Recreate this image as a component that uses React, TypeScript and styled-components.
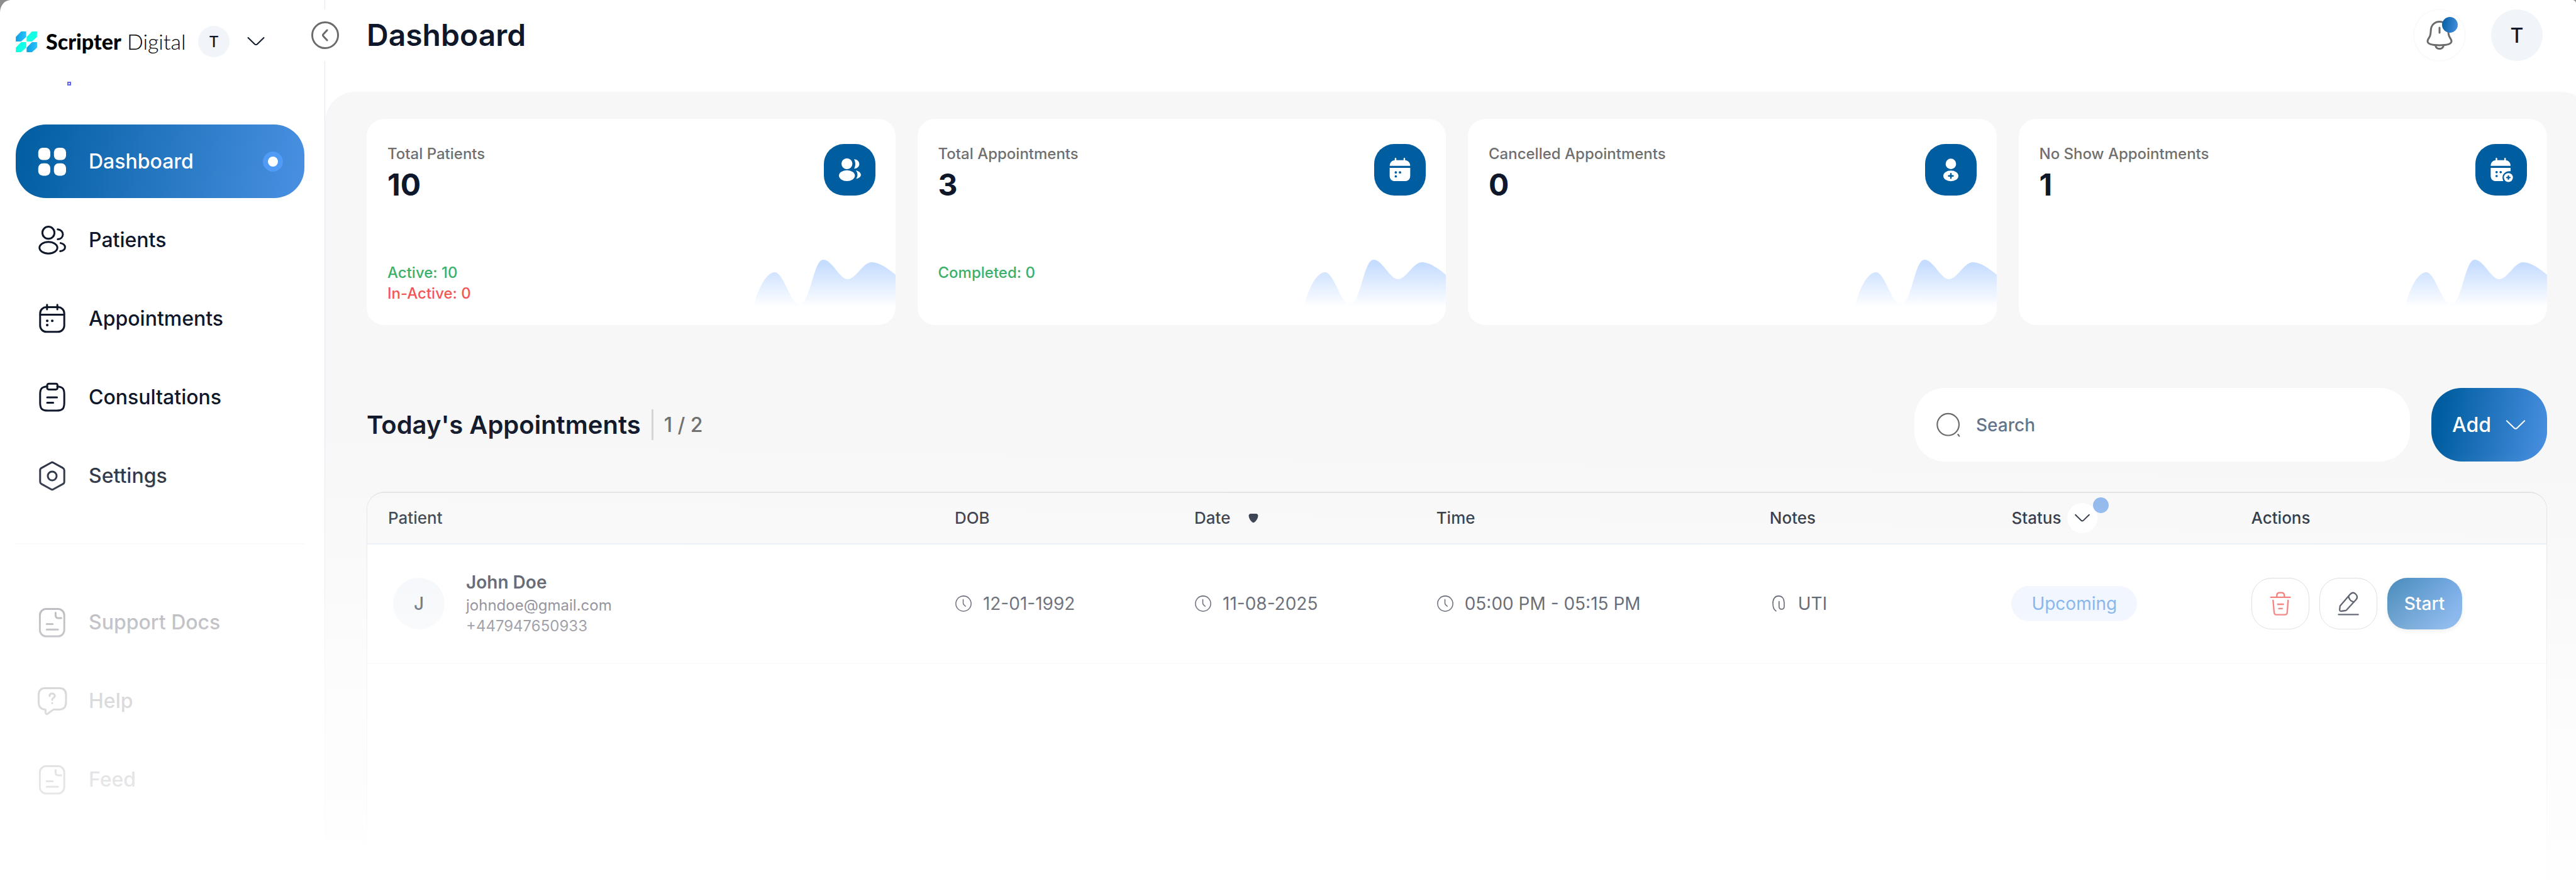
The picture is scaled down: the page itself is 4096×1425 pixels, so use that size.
import React from "react";
import styled, { createGlobalStyle, css } from "styled-components";

const ink = "#0f172a";
const muted = "#6f6f6f";
const brandBlue = "#005d9f";
const skyBlue = "#4a90e2";
const canvas = "#f7f7f7";

const GlobalStyle = createGlobalStyle`
  *, *::before, *::after { box-sizing: border-box; }
  body {
    margin: 0;
    background: #8d8d8d;
    color: ${ink};
    font-family: Inter, "Liberation Sans", sans-serif;
  }
  button, input { font: inherit; color: inherit; }
  button { border: 0; padding: 0; background: none; cursor: pointer; }
  a { color: inherit; text-decoration: none; }
  h1, h2, p { margin: 0; padding: 0; }
`;

/* ---------- Icons ---------- */

const Glyph = styled.svg<{ $size: number; $weight?: number }>`
  flex: none;
  display: block;
  width: ${(p) => p.$size}px;
  height: ${(p) => p.$size}px;
  fill: none;
  stroke: currentColor;
  stroke-width: ${(p) => p.$weight ?? 1.5};
  stroke-linecap: round;
  stroke-linejoin: round;
  overflow: visible;
`;

type IconProps = { size: number; weight?: number };

const Icon = ({ size, weight, children }: IconProps & { children: React.ReactNode }) => (
  <Glyph viewBox="0 0 24 24" $size={size} $weight={weight} aria-hidden="true">
    {children}
  </Glyph>
);

const GridIcon = ({ size }: IconProps) => (
  <Icon size={size}>
    <g fill="currentColor" stroke="none">
      <rect x="0.9" y="1" width="9.6" height="9.8" rx="3.6" />
      <rect x="13.4" y="1" width="9.6" height="9.8" rx="3.6" />
      <rect x="0.9" y="13.4" width="9.6" height="9.8" rx="3.6" />
      <rect x="13.4" y="13.4" width="9.6" height="9.8" rx="3.6" />
    </g>
  </Icon>
);

const PeopleIcon = ({ size }: IconProps) => (
  <Icon size={size}>
    <circle cx="9" cy="6.1" r="4.8" />
    <ellipse cx="9" cy="18" rx="7.1" ry="4.6" />
    <path d="M16.4 3.4c2.4.2 4.1 1.9 4.1 4s-1.7 3.7-4.1 3.9" />
    <path d="M18.7 14.3c2.1.5 3.5 1.8 3.5 3.3s-1.5 2.8-3.8 3.2" />
  </Icon>
);

const CalendarIcon = ({ size }: IconProps) => (
  <Icon size={size}>
    <rect x="2.4" y="2.7" width="19.2" height="19.7" rx="5" />
    <path d="M7.9 0.9v3.6M16.1 0.9v3.6M2.6 8.8h18.8" />
    <path d="M8 13.6h.1M12 13.6h.1M8 17h.1" strokeWidth="2" />
  </Icon>
);

const ClipboardIcon = ({ size }: IconProps) => (
  <Icon size={size}>
    <path d="M8 3.4c-4 .1-5.6 1.6-5.6 6v7c0 4.6 1.5 6.100 6 6.100h7.2c4.5 0 6-1.500 6-6.100v-7c0-4.400-1.600-5.900-5.600-6" />
    <rect x="8" y="1.1" width="8.2" height="4.6" rx="1.3" />
    <path d="M8 12h7.8M8 16.3h4.8" />
  </Icon>
);

const SettingsIcon = ({ size }: IconProps) => (
  <Icon size={size}>
    <path d="M11 1.5c.6-.4 1.4-.4 2 0l7.6 4.2c.6.4 1 1 1 1.7v9.2c0 .7-.4 1.4-1 1.7L13 22.5c-.6.4-1.4.4-2 0l-7.6-4.2c-.6-.4-1-1-1-1.7V7.4c0-.7.4-1.400 1-1.700z" />
    <circle cx="12" cy="12" r="3.5" />
  </Icon>
);

const DocIcon = ({ size }: IconProps) => (
  <Icon size={size}>
    <rect x="2.2" y="1.2" width="19.4" height="21.8" rx="5" />
    <path d="M14.7 4.3v1.900c0 1.400.8 2.300 2.200 2.300h2.300M7.600 13.300h4.800M7.600 17.600h9" />
  </Icon>
);

const HelpIcon = ({ size }: IconProps) => (
  <Icon size={size}>
    <path d="M6.3 1.8h11.4c3.4 0 5.3 1.9 5.3 5.5v5.7c0 3.6-1.9 5.7-5.3 5.7H13l-4.500 3.300c-1 .7-1.800.1-1.800-1v-2.300c-3.500 0-5.500-2.100-5.500-5.700V7.300c0-3.600 1.900-5.500 5.100-5.500z" />
    <path d="M9.900 8c0-1.300.9-2 2.100-2s2.100.8 2.100 1.900c0 1.500-2.100 1.600-2.100 3.100M12 13.600h.1" />
  </Icon>
);

const ChevronDown = ({ size, weight }: IconProps) => (
  <Icon size={size} weight={weight}>
    <path d="M2 7.200l8.400 8.200c.9.900 2.300.9 3.200 0L22 7.200" />
  </Icon>
);

const CollapseIcon = ({ size }: IconProps) => (
  <Icon size={size} weight={1.6}>
    <circle cx="12" cy="12" r="11.2" />
    <path d="M13.7 7.600l-3.200 3.500c-.5.500-.5 1.300 0 1.800l3.200 3.500" />
  </Icon>
);

const BellIcon = ({ size }: IconProps) => (
  <Icon size={size}>
    <path d="M12 1.200c-4 0-6.700 2.900-6.900 6.800-.1 2.500-.2 3.600-.9 5.100-.8 1.600-1.700 2.300-1.700 3.700 0 2.200 3.600 3.200 9.500 3.200s9.500-1 9.500-3.200c0-1.400-.9-2.100-1.700-3.700-.7-1.500-.8-2.600-.9-5.100C18.700 4.100 16 1.200 12 1.200z" />
    <path d="M8.800 20.300c.4 1.500 1.600 2.500 3.200 2.500s2.800-1 3.200-2.500M12 6v4" />
  </Icon>
);

const SearchIcon = ({ size }: IconProps) => (
  <Icon size={size} weight={1.3}>
    <circle cx="11.8" cy="11.5" r="10.4" />
    <path d="M21.2 21l1.200 1.600" />
  </Icon>
);

const ClockIcon = ({ size }: IconProps) => (
  <Icon size={size} weight={1.3}>
    <circle cx="12" cy="12" r="10.4" />
    <path d="M11.600 6.400v5c0 .9.300 1.600 1 2.200l2.200 2" />
  </Icon>
);

const ClipIcon = ({ size }: IconProps) => (
  <Icon size={size} weight={1.4}>
    <path d="M8.600 22.200C5.600 20.200 4.300 16.500 4.300 11.500 4.300 5.200 7.300 1.600 12 1.600s7.700 3.600 7.700 9.400v4.600c0 2.500-1.300 4-3.500 4s-3.500-1.500-3.500-4V9" />
  </Icon>
);

const TrashIcon = ({ size }: IconProps) => (
  <Icon size={size} weight={1.4}>
    <path d="M2.800 5.900h18.500M8.600 5.700V4.200c0-1.700 1-2.600 2.600-2.600h1.900c1.600 0 2.600.9 2.600 2.600v1.500M5 9l1 11.400c.1 1.400.8 2.200 2.200 2.200h8.200c1.400 0 2-.8 2.100-2.200L19.300 9M9.400 12.600h5.400M10.500 16.700h3.200" />
  </Icon>
);

const PencilIcon = ({ size }: IconProps) => (
  <Icon size={size} weight={1.4}>
    <path d="M4.100 14.300l9.300-10.800c2-2.400 3.700-2.300 5.400-.8 2.200 2 2.200 3.600.5 5.500l-8.800 9.700c-.3.400-.7.600-1.200.7l-4.100.6c-1 .1-1.500-.4-1.500-1.400zM12.300 5.200c.4 2.700 2.100 4.700 5 5.300M2.700 22.400h18.700" />
  </Icon>
);

const SortMark = styled.svg`
  display: block;
  width: 16px;
  height: 16px;
  fill: currentColor;
`;

const PeopleSolid = () => (
  <Icon size={40}>
    <g fill="currentColor" stroke="none">
      <circle cx="9.4" cy="6.2" r="5.2" />
      <ellipse cx="9.4" cy="17.6" rx="7.6" ry="5.2" />
      <path d="M16.200 2c2.900 0 5 2 5 4.500s-2.100 4.500-5 4.500c1.600-2.800 1.600-6.200 0-9z" />
      <path d="M18 12.600c2.800.7 4.700 2.300 4.700 4.200s-1.900 3.300-4.500 3.900c1.700-2.600 1.700-5.500-.2-8.100z" />
    </g>
  </Icon>
);

const CalendarSolid = () => (
  <Icon size={40}>
    <g fill="currentColor" stroke="none">
      <path d="M2.200 8.300C2.400 4.600 4.600 2.900 8 2.900h8c3.400 0 5.600 1.700 5.800 5.400z" />
      <path d="M2.200 10.200h19.600v7.300c0 3.500-1.700 5.300-5.300 5.300h-9c-3.600 0-5.300-1.800-5.300-5.300z" />
    </g>
    <path d="M7.800 1.400v2.500M16.200 1.400v2.500" />
    <path d="M8 14.500h.1M12 14.500h.1M8 18.300h.1" stroke={brandBlue} strokeWidth="2.2" />
  </Icon>
);

const PersonCrossSolid = () => (
  <Icon size={40}>
    <g fill="currentColor" stroke="none">
      <circle cx="12" cy="6.4" r="5" />
      <ellipse cx="12" cy="17.9" rx="7.2" ry="5.1" />
    </g>
    <path d="M12 15.800v4.200M9.900 17.900h4.200" stroke={brandBlue} />
  </Icon>
);

const CalendarCrossSolid = () => (
  <Icon size={40}>
    <g fill="currentColor" stroke="none">
      <path d="M2 8.300c.2-3.700 2.300-5.400 5.700-5.400h7.600c3.400 0 5.500 1.700 5.700 5.400z" />
      <path d="M2 10.200h19v3.200c-4.300-.6-7.700 2.200-7.700 6 0 1 .2 2.100.8 3.400H7.200C3.700 22.800 2 21 2 17.500z" />
      <circle cx="18.9" cy="19.4" r="4.3" />
    </g>
    <path d="M7.500 1.400v2.500M15.700 1.400v2.500" />
    <path d="M7.600 14.300h.1M11.500 14.300h.1M7.600 18h.1" stroke={brandBlue} strokeWidth="2.2" />
    <path d="M18.900 17.900v3M17.400 19.400h3" stroke={brandBlue} strokeWidth="1.4" />
  </Icon>
);

/* ---------- Shell ---------- */

const Shell = styled.div`
  position: relative;
  display: grid;
  grid-template-columns: 517px minmax(0, 1fr);
  min-height: 100vh;
  background: #fff;
  border-radius: 17px 6px 0 0 / 20px 5px 0 0;
  overflow: hidden;
`;

const BottomFade = styled.div`
  position: absolute;
  inset: 0;
  pointer-events: none;
  background: linear-gradient(
    181deg,
    rgba(255, 255, 255, 0) 721px,
    rgba(255, 255, 255, 0.17) 837px,
    rgba(255, 255, 255, 0.28) 921px,
    rgba(255, 255, 255, 0.38) 994px,
    rgba(255, 255, 255, 0.54) 1065px,
    rgba(255, 255, 255, 0.69) 1155px,
    rgba(255, 255, 255, 0.81) 1330px,
    rgba(255, 255, 255, 0.94) 1396px,
    #fff 1428px
  );
`;

const Sidebar = styled.aside`
  position: relative;
  display: flex;
  flex-direction: column;
  padding: 41px 32px 0 25px;
  border-right: 1px solid #e2e8f0;
`;

const Brand = styled.div`
  display: flex;
  align-items: center;
  height: 50px;
`;

const LogoMark = styled.svg`
  width: 34px;
  height: 33px;
  margin-right: 14px;
`;

const BrandName = styled.span`
  flex: none;
  width: 220px;
  font-family: Lato, sans-serif;
  font-size: 34px;
  font-weight: 300;
  line-height: 42px;
  color: #000;
  white-space: nowrap;

  strong { font-weight: 900; }
`;

const Avatar = styled.span<{ $size: number; $font: number }>`
  display: inline-flex;
  flex: none;
  align-items: center;
  justify-content: center;
  width: ${(p) => p.$size}px;
  height: ${(p) => p.$size}px;
  border-radius: 50%;
  background: #f1f5f9;
  font-size: ${(p) => p.$font}px;
  font-weight: 500;
`;

const AccountButton = styled.button`
  display: flex;
  align-items: center;
  gap: 27px;
  margin-left: 22px;
`;

const PulseDot = styled.span`
  width: 6px;
  height: 6px;
  margin: 39px 0 62px 82px;
  border: 2px solid #6366f1;
`;

const CollapseButton = styled.button`
  position: absolute;
  top: 15px;
  right: -42px;
  z-index: 1;
  display: grid;
  place-items: center;
  width: 82px;
  height: 82px;
  background: #fff;
  color: #6b6b6b;
`;

const NavList = styled.nav`
  display: flex;
  flex-direction: column;
  gap: 8px;
`;

const NavLink = styled.a<{ $active?: boolean; $quiet?: boolean }>`
  display: flex;
  align-items: center;
  gap: 34px;
  height: 117px;
  padding: 0 34px;
  border-radius: 48px;
  font-size: 32px;
  font-weight: 500;
  line-height: 40px;
  color: ${(p) => (p.$quiet ? "#80808a" : ink)};
  ${(p) =>
    p.$active &&
    css`
      color: #fff;
      background: linear-gradient(100deg, ${brandBlue}, ${skyBlue});
    `}
`;

const ActiveDot = styled.span`
  width: 32px;
  height: 32px;
  margin-left: auto;
  border: 8px solid #509bf5;
  border-radius: 50%;
  background: #fff;
`;

const SidebarRule = styled.hr`
  width: 100%;
  height: 2px;
  margin: 49px 0 65px;
  border: 0;
  background: #f8f8f8;
`;

/* ---------- Main ---------- */

const Main = styled.main`
  display: flex;
  flex-direction: column;
  min-width: 0;
`;

const TopBar = styled.header`
  display: flex;
  align-items: center;
  justify-content: space-between;
  padding: 14px 53px 48px 66px;
`;

const PageTitle = styled.h1`
  font-size: 48px;
  font-weight: 600;
  line-height: 56px;
`;

const TopActions = styled.div`
  display: flex;
  align-items: center;
  gap: 40px;
`;

const BellButton = styled.button`
  position: relative;
  display: grid;
  place-items: center;
  width: 84px;
  height: 84px;
  border: 2px solid #fafafb;
  border-radius: 50%;
  color: #6b6b6b;
`;

const BellBadge = styled.span`
  position: absolute;
  top: 11px;
  right: 11px;
  width: 25px;
  height: 25px;
  border-radius: 50%;
  background: linear-gradient(100deg, ${brandBlue}, ${skyBlue});
`;

const Panel = styled.div`
  display: flex;
  flex: 1;
  flex-direction: column;
  padding: 43px 46px 0 66px;
  border-radius: 48px 26px 0 0 / 48px 9px 0 0;
  background: ${canvas};
`;

const Stats = styled.section`
  display: grid;
  grid-template-columns: repeat(4, minmax(0, 1fr));
  gap: 35px;
`;

const StatCard = styled.article`
  display: flex;
  flex-direction: column;
  gap: 91px;
  padding: 40px 0 29px 33px;
  border-radius: 28px;
  background: #fff;
  overflow: hidden;
`;

const StatTop = styled.div`
  display: flex;
  align-items: flex-start;
  justify-content: space-between;
  padding-right: 32px;
`;

const StatLabel = styled.h2`
  margin-bottom: 5px;
  font-size: 24px;
  font-weight: 500;
  line-height: 32px;
  color: ${muted};
`;

const StatValue = styled.p`
  font-size: 48px;
  font-weight: 700;
  line-height: 56px;
`;

const StatBadge = styled.span`
  display: grid;
  place-items: center;
  width: 82px;
  height: 82px;
  border-radius: 32px;
  background: ${brandBlue};
  color: #fff;
`;

const StatBottom = styled.div`
  display: flex;
  justify-content: space-between;
  height: 75px;
`;

const StatNotes = styled.div`
  padding-top: 4px;
`;

const StatNote = styled.p<{ $tone: "good" | "bad" }>`
  font-size: 24px;
  font-weight: 500;
  line-height: 33px;
  color: ${(p) => (p.$tone === "good" ? "#3bb06b" : "#f25656")};
`;

const Wave = styled.svg`
  display: block;
  width: 226px;
  height: 75px;
`;

const ListHeader = styled.div`
  display: flex;
  align-items: center;
  gap: 34px;
  margin-top: 100px;
`;

const ListTitle = styled.h2`
  font-size: 40px;
  font-weight: 600;
  line-height: 48px;
`;

const ListCount = styled.p`
  margin: 0 auto 0 -17px;
  padding-left: 17px;
  border-left: 3px solid #d4d4d4;
  font-size: 32px;
  font-weight: 500;
  line-height: 49px;
  color: ${muted};
`;

const SearchBox = styled.label`
  display: flex;
  align-items: center;
  gap: 24px;
  flex: 0 0 788px;
  height: 117px;
  padding: 0 34px;
  border-radius: 48px;
  background: #fff;
  color: #6b6b6b;
`;

const SearchInput = styled.input`
  flex: 1;
  min-width: 0;
  padding: 0;
  border: 0;
  outline: 0;
  background: transparent;
  font-size: 28px;
  font-weight: 500;
  line-height: 36px;

  &::placeholder { color: #64748b; opacity: 1; }
`;

const AddButton = styled.button`
  display: flex;
  align-items: center;
  justify-content: center;
  gap: 22px;
  width: 184px;
  height: 117px;
  border-radius: 48px;
  background: linear-gradient(100deg, ${brandBlue} 10%, ${skyBlue});
  color: #fff;
  font-size: 32px;
  font-weight: 500;
`;

const TableFrame = styled.div`
  flex: 1;
  margin-top: 48px;
  border: 1px solid #e0e0e0;
  border-top-width: 2px;
  border-bottom: 0;
  border-radius: 28px 28px 0 0;
  background: #fff;
`;

const Table = styled.table`
  width: 100%;
  table-layout: fixed;
  border-collapse: separate;
  border-spacing: 0;
`;

const HeadCell = styled.th<{ $width?: string }>`
  width: ${(p) => p.$width ?? "auto"};
  height: 82px;
  padding: 0 0 0 33px;
  border-bottom: 2px solid #e6edf6;
  background: ${canvas};
  font-size: 26px;
  font-weight: 500;
  line-height: 32px;
  text-align: left;

  &:first-child { border-top-left-radius: 26px; }
  &:last-child { border-top-right-radius: 26px; }
`;

const HeadContent = styled.div<{ $gap: number }>`
  display: flex;
  align-items: center;
  gap: ${(p) => p.$gap}px;
`;

const SortButton = styled.button`
  display: block;
`;

const FilterButton = styled.button`
  position: relative;
  display: grid;
  place-items: center;
  width: 48px;
  height: 48px;
  border-radius: 50%;
  background: #fff;
`;

const FilterBadge = styled.span`
  position: absolute;
  top: -9px;
  right: -18px;
  width: 25px;
  height: 25px;
  border-radius: 50%;
  background: #84b0eb;
`;

const Cell = styled.td`
  height: 190px;
  padding: 0 0 0 33px;
  border-bottom: 2px solid #f4f4f5;
  font-size: 28px;
  line-height: 36px;
`;

const Person = styled.div`
  display: flex;
  align-items: center;
  gap: 34px;
  padding-left: 8px;
`;

const PersonName = styled.p`
  margin-bottom: 2px;
  font-size: 28px;
  font-weight: 600;
  line-height: 36px;
`;

const PersonDetail = styled.p`
  font-size: 24px;
  line-height: 33px;
  color: #3f4150;
`;

const IconText = styled.div`
  display: flex;
  align-items: center;
  gap: 17px;
`;

const StatusPill = styled.span`
  display: inline-block;
  padding: 10px 32px;
  border-radius: 28px;
  background: #ebf2ff;
  color: ${skyBlue};
`;

const RowActions = styled.div`
  display: flex;
  gap: 16px;
`;

const IconButton = styled.button<{ $danger?: boolean }>`
  display: grid;
  place-items: center;
  width: 92px;
  height: 82px;
  border: 1px solid #d0d0d0;
  border-radius: 32px;
  color: ${(p) => (p.$danger ? "#f04444" : ink)};
`;

const StartButton = styled.button`
  width: 119px;
  height: 82px;
  border-radius: 32px;
  background: linear-gradient(115deg, ${brandBlue}, ${skyBlue} 85%);
  box-shadow: 0 3px 6px rgba(15, 23, 42, 0.1);
  color: #fff;
  font-size: 28px;
  font-weight: 500;
`;

/* ---------- Data ---------- */

type NavEntry = {
  label: string;
  icon: (props: IconProps) => React.ReactElement;
  active?: boolean;
};

const primaryNav: NavEntry[] = [
  { label: "Dashboard", icon: GridIcon, active: true },
  { label: "Patients", icon: PeopleIcon },
  { label: "Appointments", icon: CalendarIcon },
  { label: "Consultations", icon: ClipboardIcon },
  { label: "Settings", icon: SettingsIcon },
];

const supportNav: NavEntry[] = [
  { label: "Support Docs", icon: DocIcon },
  { label: "Help", icon: HelpIcon },
  { label: "Feed", icon: DocIcon },
];

type Note = { text: string; tone: "good" | "bad" };

const stats: { label: string; value: string; icon: () => React.ReactElement; notes: Note[] }[] = [
  {
    label: "Total Patients",
    value: "10",
    icon: PeopleSolid,
    notes: [
      { text: "Active: 10", tone: "good" },
      { text: "In-Active: 0", tone: "bad" },
    ],
  },
  {
    label: "Total Appointments",
    value: "3",
    icon: CalendarSolid,
    notes: [{ text: "Completed: 0", tone: "good" }],
  },
  { label: "Cancelled Appointments", value: "0", icon: PersonCrossSolid, notes: [] },
  { label: "No Show Appointments", value: "1", icon: CalendarCrossSolid, notes: [] },
];

const appointments = [
  {
    initial: "J",
    name: "John Doe",
    email: "johndoe@gmail.com",
    phone: "+447947650933",
    dob: "12-01-1992",
    date: "11-08-2025",
    time: "05:00 PM - 05:15 PM",
    notes: "UTI",
    status: "Upcoming",
  },
];

/* ---------- Parts ---------- */

const StatWave = ({ id }: { id: string }) => (
  <Wave viewBox="0 0 226 75" aria-hidden="true">
    <defs>
      <linearGradient id={id} x1="0" y1="0" x2="0" y2="1">
        <stop offset="0.1" stopColor="#c7ddff" />
        <stop offset="1" stopColor="#fff" />
      </linearGradient>
    </defs>
    <path
      fill={`url(#${id})`}
      d="M0 75C8 44 21 20 34 20c14 0 25 51 39 51C91 71 95 0 111 0c14 0 26 31 39 31 13 0 24-27 38-27 12 0 26 10 38 20v51z"
    />
  </Wave>
);

const NavItems = ({ items, quiet }: { items: NavEntry[]; quiet?: boolean }) => (
  <>
    {items.map(({ label, icon: ItemIcon, active }) => (
      <NavLink
        key={label}
        href={`#${label.toLowerCase().replace(" ", "-")}`}
        $active={active}
        $quiet={quiet}
        aria-current={active ? "page" : undefined}
      >
        <ItemIcon size={48} />
        {label}
        {active && <ActiveDot />}
      </NavLink>
    ))}
  </>
);

export default function App() {
  return (
    <>
      <GlobalStyle />
      <Shell>
        <Sidebar>
          <Brand>
            <LogoMark viewBox="0 0 42 41" aria-hidden="true">
              <defs>
                <linearGradient id="logo-blue" x1="0" y1="0" x2="1" y2="0">
                  <stop offset="0" stopColor="#0e9fe0" />
                  <stop offset="1" stopColor="#27c3ff" />
                </linearGradient>
              </defs>
              <path fill="url(#logo-blue)" d="M0 11L10.500 0H20.500V11L10.500 20H0z" />
              <path fill="#12ffe6" d="M21.500 11L32 0H42V11L32 20H21.500z" />
              <path fill="#12ffe6" d="M0 32L10.500 21H20.500V32L10.500 41H0z" />
              <path fill="url(#logo-blue)" d="M21.500 32L32 21H42V32L32 41H21.500z" />
            </LogoMark>
            <BrandName>
              <strong>Scripter</strong> Digital
            </BrandName>
            <AccountButton aria-label="Switch account">
              <Avatar $size={50} $font={24}>T</Avatar>
              <ChevronDown size={30} weight={1.6} />
            </AccountButton>
          </Brand>
          <CollapseButton aria-label="Collapse sidebar">
            <CollapseIcon size={44} />
          </CollapseButton>
          <PulseDot />
          <NavList aria-label="Primary">
            <NavItems items={primaryNav} />
          </NavList>
          <SidebarRule />
          <NavList aria-label="Support">
            <NavItems items={supportNav} quiet />
          </NavList>
        </Sidebar>

        <Main>
          <TopBar>
            <PageTitle>Dashboard</PageTitle>
            <TopActions>
              <BellButton aria-label="Notifications">
                <BellIcon size={48} />
                <BellBadge />
              </BellButton>
              <Avatar $size={82} $font={32}>T</Avatar>
            </TopActions>
          </TopBar>

          <Panel>
            <Stats>
              {stats.map(({ label, value, icon: BadgeIcon, notes }, i) => (
                <StatCard key={label}>
                  <StatTop>
                    <div>
                      <StatLabel>{label}</StatLabel>
                      <StatValue>{value}</StatValue>
                    </div>
                    <StatBadge>
                      <BadgeIcon />
                    </StatBadge>
                  </StatTop>
                  <StatBottom>
                    <StatNotes>
                      {notes.map((note) => (
                        <StatNote key={note.text} $tone={note.tone}>{note.text}</StatNote>
                      ))}
                    </StatNotes>
                    <StatWave id={`wave-${i}`} />
                  </StatBottom>
                </StatCard>
              ))}
            </Stats>

            <ListHeader>
              <ListTitle>Today's Appointments</ListTitle>
              <ListCount>1 / 2</ListCount>
              <SearchBox>
                <SearchIcon size={40} />
                <SearchInput type="text" placeholder="Search" aria-label="Search" />
              </SearchBox>
              <AddButton>
                Add
                <ChevronDown size={34} weight={1.4} />
              </AddButton>
            </ListHeader>

            <TableFrame>
              <Table>
                <thead>
                  <tr>
                    <HeadCell $width="26%">Patient</HeadCell>
                    <HeadCell $width="11%">DOB</HeadCell>
                    <HeadCell $width="11.1%">
                      <HeadContent $gap={29}>
                        Date
                        <SortButton aria-label="Sort by date">
                          <SortMark viewBox="0 0 16 16">
                            <path d="M4 1h8c2.500 0 3.800 1.700 3.400 4-.6 4-3 7.500-5.600 9.500-1.200.9-2.400.9-3.600 0C3.600 12.500 1.200 9 .6 5 .2 2.700 1.500 1 4 1z" />
                          </SortMark>
                        </SortButton>
                      </HeadContent>
                    </HeadCell>
                    <HeadCell $width="15.3%">Time</HeadCell>
                    <HeadCell $width="11.1%">Notes</HeadCell>
                    <HeadCell $width="11%">
                      <HeadContent $gap={10}>
                        Status
                        <FilterButton aria-label="Filter by status">
                          <ChevronDown size={26} weight={1.8} />
                          <FilterBadge />
                        </FilterButton>
                      </HeadContent>
                    </HeadCell>
                    <HeadCell>Actions</HeadCell>
                  </tr>
                </thead>
                <tbody>
                  {appointments.map((row) => (
                    <tr key={row.email}>
                      <Cell>
                        <Person>
                          <Avatar $size={82} $font={28}>{row.initial}</Avatar>
                          <div>
                            <PersonName>{row.name}</PersonName>
                            <PersonDetail>{row.email}</PersonDetail>
                            <PersonDetail>{row.phone}</PersonDetail>
                          </div>
                        </Person>
                      </Cell>
                      <Cell>
                        <IconText><ClockIcon size={28} />{row.dob}</IconText>
                      </Cell>
                      <Cell>
                        <IconText><ClockIcon size={28} />{row.date}</IconText>
                      </Cell>
                      <Cell>
                        <IconText><ClockIcon size={28} />{row.time}</IconText>
                      </Cell>
                      <Cell>
                        <IconText><ClipIcon size={28} />{row.notes}</IconText>
                      </Cell>
                      <Cell>
                        <StatusPill>{row.status}</StatusPill>
                      </Cell>
                      <Cell>
                        <RowActions>
                          <IconButton $danger aria-label="Delete appointment">
                            <TrashIcon size={40} />
                          </IconButton>
                          <IconButton aria-label="Edit appointment">
                            <PencilIcon size={40} />
                          </IconButton>
                          <StartButton>Start</StartButton>
                        </RowActions>
                      </Cell>
                    </tr>
                  ))}
                </tbody>
              </Table>
            </TableFrame>
          </Panel>
        </Main>
        <BottomFade />
      </Shell>
    </>
  );
}
